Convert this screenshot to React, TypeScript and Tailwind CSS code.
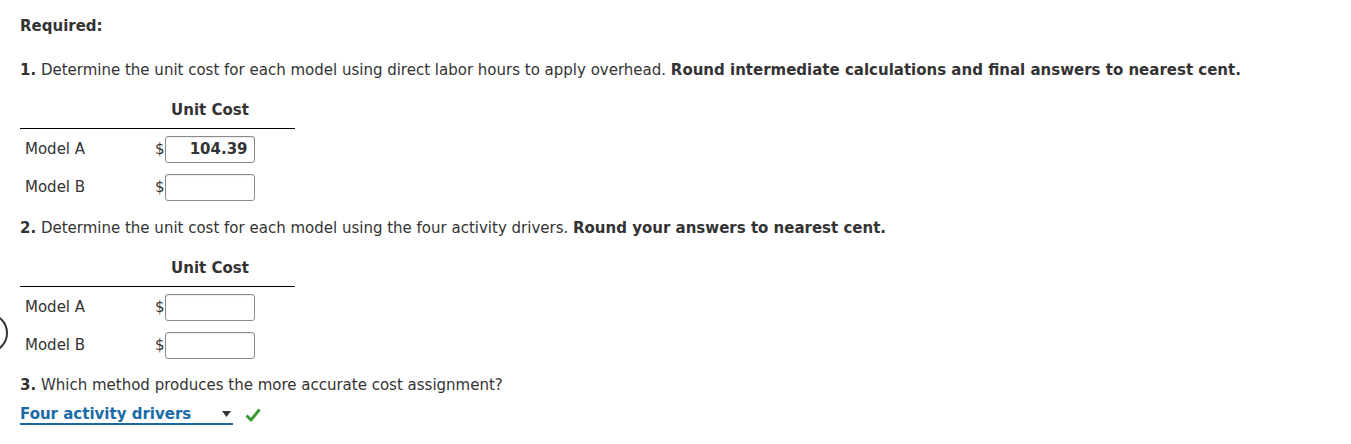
import React from "react";

const rowCls = "flex items-center h-[38px]";

const CostRow: React.FC<{ label: string; value?: string }> = ({ label, value }) => {
    return (
        <div className={rowCls}>
            <div className="w-[135px] pl-[5px]">{label}</div>
            <div className="flex items-center">
                <span className="text-[#333]">$</span>
                <div className="w-[90px] h-[27px] border border-[#8a8a8a] rounded-[3px] shadow-[inset_0_1px_1px_rgba(0,0,0,0.08)] flex items-center justify-end pr-[6px] font-bold bg-white">
                    {value}
                </div>
            </div>
        </div>
    );
};

const CostTable: React.FC<{ a?: string; b?: string }> = ({ a, b }) => {
    return (
        <div className="w-[275px]">
            <div className="flex h-[36px] items-center">
                <div className="w-[145px]"></div>
                <div className="w-[90px] text-center font-bold">Unit Cost</div>
            </div>
            <div className="border-t-[1.5px] border-black mb-[1px]"></div>
            <CostRow label="Model A" value={a} />
            <CostRow label="Model B" value={b} />
        </div>
    );
};

const App: React.FC = () => {
    return (
        <div className="relative w-[1351px] h-[444px] bg-white text-[#333] text-[15px] overflow-hidden" style={{ fontFamily: "'DejaVu Sans', Verdana, sans-serif" }}>
            <div className="absolute left-[-32px] top-[313px] w-[40px] h-[40px] rounded-full border-2 border-[#333]"></div>
            <div className="px-[20px] pt-[15px]">
                <p className="font-bold h-[22px] leading-[22px]">Required:</p>
                <p className="mt-[22px] h-[22px] leading-[22px]">
                    <b>1.</b> Determine the unit cost for each model using direct labor hours to apply overhead. <b>Round intermediate calculations and final answers to nearest cent.</b>
                </p>
                <div className="mt-[11px]">
                    <CostTable a="104.39" />
                </div>
                <p className="mt-[11px] h-[22px] leading-[22px]">
                    <b>2.</b> Determine the unit cost for each model using the four activity drivers. <b>Round your answers to nearest cent.</b>
                </p>
                <div className="mt-[11px]">
                    <CostTable />
                </div>
                <p className="mt-[10px] h-[22px] leading-[22px]">
                    <b>3.</b> Which method produces the more accurate cost assignment?
                </p>
                <div className="mt-[9px] flex items-center gap-[12px]">
                    <div className="w-[213px] h-[20px] border-b-2 border-[#1a6aa8] flex items-center justify-between pr-[2px]">
                        <span className="font-bold text-[#1a6aa8] leading-[18px]">Four activity drivers</span>
                        <svg width="9" height="6" viewBox="0 0 9 6"><path d="M0 0 H9 L4.5 6 Z" fill="#333" /></svg>
                    </div>
                    <svg width="16" height="14" viewBox="0 0 16 14">
                        <path d="M1.5 7.5 L6 12 L14.5 1.5" fill="none" stroke="#3a9a3a" strokeWidth="3" strokeLinejoin="round" />
                    </svg>
                </div>
            </div>
        </div>
    );
};

export default App;
